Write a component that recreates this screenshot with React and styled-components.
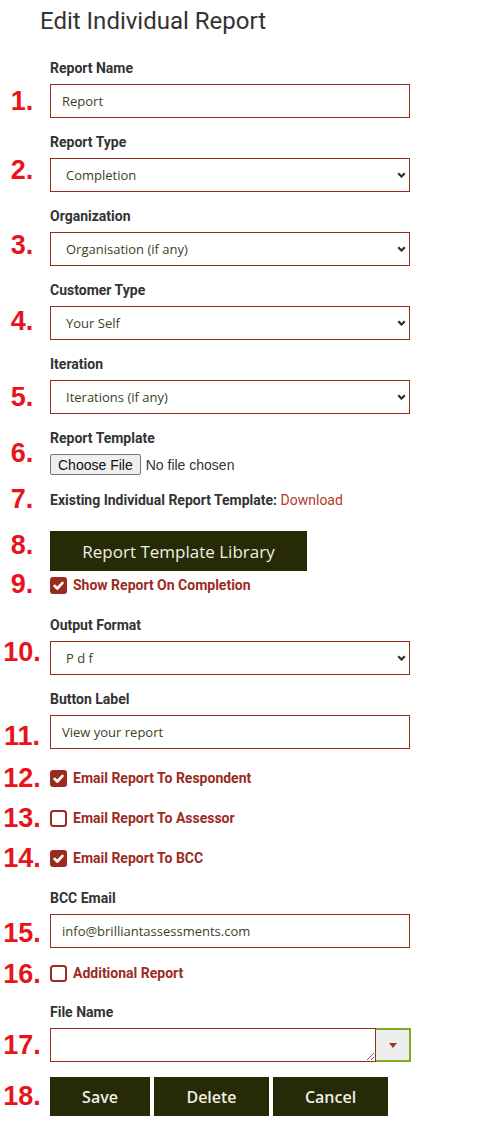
import React from "react";
import styled, { createGlobalStyle } from "styled-components";

const GlobalStyle = createGlobalStyle`
  * {
    box-sizing: border-box;
  }

  body {
    margin: 0;
    background: #fff;
    font-family: Roboto, "Liberation Sans", sans-serif;
  }
`;

const Page = styled.div`
  width: 477px;
  padding-bottom: 16px;
`;

const Title = styled.h2`
  margin: 7px 0 0 40px;
  font: 400 24px/28px Roboto, sans-serif;
  color: #333;
`;

/* every line of the form: step number on the left, content on the right */
const Row = styled.div`
  display: grid;
  grid-template-columns: 44px 360px;
  column-gap: 6px;
  row-gap: 7px;
  margin-top: ${(p) => p.$mt ?? 16}px;
`;

const Num = styled.div`
  grid-column: 1;
  grid-row: ${(p) => p.$rows || "auto"};
  display: flex;
  align-items: center;
  justify-content: center;
  font: 700 27px/0 "Liberation Sans", Arial, sans-serif;
  color: #e8141b;
  transform: translateY(${(p) => p.$dy || 0}px);
`;

const Label = styled.label`
  grid-column: 2;
  grid-row: 1;
  font: 700 14px/17px Roboto, sans-serif;
  color: #333;
`;

const TextInput = styled.input`
  grid-column: 2;
  width: 360px;
  height: 34px;
  padding: 0 11px;
  border: 1px solid #9a2c1f;
  border-radius: 0;
  outline: none;
  background: #fff;
  font: 400 13px "Open Sans", sans-serif;
  color: #3c421e;
`;

const SelectWrap = styled.div`
  grid-column: 2;
  position: relative;
  width: 360px;
  height: 34px;
`;

const Select = styled.select`
  appearance: none;
  width: 100%;
  height: 100%;
  padding: 0 30px 0 15px;
  border: 1px solid #9a2c1f;
  border-radius: 0;
  outline: none;
  background: #fff;
  font: 400 13px "Open Sans", sans-serif;
  color: #3c421e;
`;

const Chevron = styled.svg`
  position: absolute;
  right: 4px;
  top: 14px;
  pointer-events: none;
`;

const FilePicker = styled.div`
  grid-column: 2;
  display: flex;
  align-items: center;
  gap: 5px;
  font: 400 14px "Liberation Sans", Arial, sans-serif;
  color: #333;
`;

const FileButton = styled.button`
  height: 21px;
  padding: 0 7px;
  border: 1px solid #767676;
  border-radius: 2px;
  background: #efefef;
  font: 400 14px "Liberation Sans", Arial, sans-serif;
  color: #111;
`;

const Note = styled.div`
  grid-column: 2;
  font: 700 14px/17px Roboto, sans-serif;
  color: #333;

  a {
    font-weight: 400;
    color: #b5382b;
    text-decoration: none;
  }
`;

const ButtonSlot = styled.div`
  grid-column: 2;
  display: flex;
  gap: 4px;
  padding-top: ${(p) => p.$pad || 0}px;
`;

const DarkButton = styled.button`
  width: ${(p) => p.$w}px;
  height: ${(p) => p.$h || 39}px;
  border: none;
  background: #262a06;
  color: #efefe4;
  font: ${(p) => (p.$big ? "500 17px" : "600 16px")} "Open Sans", sans-serif;
  cursor: pointer;
`;

const CheckLabel = styled.label`
  grid-column: 2;
  display: flex;
  align-items: center;
  gap: 6px;
  height: 17px;
  font: 700 14px/17px Roboto, sans-serif;
  color: #9a2c1f;
`;

const Combo = styled.div`
  grid-column: 2;
  display: flex;
  width: 361px;
  height: 34px;
`;

const TextArea = styled.textarea`
  width: 326px;
  height: 34px;
  border: 1px solid #9a2c1f;
  border-radius: 0;
  outline: none;
  font: 400 13px "Open Sans", sans-serif;
  color: #3c421e;
`;

const DropButton = styled.span`
  display: flex;
  align-items: center;
  justify-content: center;
  width: 35px;
  height: 34px;
  background: #eee;
  border: 2px solid #7eab1e;
  border-left: none;

  &::after {
    content: "";
    border-left: 4px solid transparent;
    border-right: 4px solid transparent;
    border-top: 5px solid #a3342a;
  }
`;

const CheckBox = ({ checked }) => (
  <svg width="17" height="17" viewBox="0 0 17 17">
    {checked ? (
      <>
        <rect x="0" y="0" width="17" height="17" rx="3" fill="#9a2c1f" />
        <path d="M4.5 8.8l2.8 2.7 5.2-5.6" fill="none" stroke="#fff" strokeWidth="2.6" strokeLinecap="round" strokeLinejoin="round" />
      </>
    ) : (
      <rect x="1" y="1" width="15" height="15" rx="2.5" fill="#fff" stroke="#9a2c1f" strokeWidth="2" />
    )}
  </svg>
);

const TextField = ({ n, dy, label, value }) => (
  <Row>
    <Label>{label}</Label>
    <Num $rows="2" $dy={dy}>{n}.</Num>
    <TextInput defaultValue={value} />
  </Row>
);

const SelectField = ({ n, dy, label, value, mt }) => (
  <Row $mt={mt}>
    <Label>{label}</Label>
    <Num $rows="2" $dy={dy}>{n}.</Num>
    <SelectWrap>
      <Select defaultValue={value}>
        <option>{value}</option>
      </Select>
      <Chevron width="9" height="6" viewBox="0 0 9 6">
        <path d="M1.2 1.2l3.3 3.3 3.3-3.3" fill="none" stroke="#2f3410" strokeWidth="2.2" />
      </Chevron>
    </SelectWrap>
  </Row>
);

const CheckRow = ({ n, dy, mt, checked, children }) => (
  <Row $mt={mt}>
    <Num $dy={dy}>{n}.</Num>
    <CheckLabel>
      <CheckBox checked={checked} />
      {children}
    </CheckLabel>
  </Row>
);

export default function App() {
  return (
    <Page>
      <GlobalStyle />
      <Title>Edit Individual Report</Title>

      <Row $mt={25}>
        <Label>Report Name</Label>
        <Num $rows="2">1.</Num>
        <TextInput defaultValue="Report" />
      </Row>
      <SelectField n={2} dy={-5} label="Report Type" value="Completion" />
      <SelectField n={3} dy={-4} label="Organization" value="Organisation (if any)" />
      <SelectField n={4} dy={-2} label="Customer Type" value="Your Self" />
      <SelectField n={5} label="Iteration" value="Iterations (if any)" />

      <Row>
        <Label>Report Template</Label>
        <Num $rows="1 / span 2">6.</Num>
        <FilePicker>
          <FileButton>Choose File</FileButton>
          <span>No file chosen</span>
        </FilePicker>
      </Row>

      <Row $mt={17}>
        <Num $dy={-2}>7.</Num>
        <Note>
          Existing Individual Report Template: <a href="#download">Download</a>
        </Note>
      </Row>

      <Row $mt={10}>
        <Num>8.</Num>
        <ButtonSlot $pad={12}>
          <DarkButton $w={257} $h={40} $big>Report Template Library</DarkButton>
        </ButtonSlot>
      </Row>

      <CheckRow n={9} dy={-2} mt={6} checked>Show Report On Completion</CheckRow>

      <SelectField n={10} dy={-6} mt={23} label="Output Format" value="P d f" />
      <TextField n={11} dy={4} label="Button Label" value="View your report" />

      <CheckRow n={12} dy={-1} mt={21} checked>Email Report To Respondent</CheckRow>
      <CheckRow n={13} dy={-1} mt={23}>Email Report To Assessor</CheckRow>
      <CheckRow n={14} dy={-1} mt={23} checked>Email Report To BCC</CheckRow>

      <Row $mt={23}>
        <Label>BCC Email</Label>
        <Num $rows="2" $dy={2}>15.</Num>
        <TextInput defaultValue="info@brilliantassessments.com" />
      </Row>

      <CheckRow n={16} mt={17}>Additional Report</CheckRow>

      <Row $mt={22}>
        <Label>File Name</Label>
        <Num $rows="2">17.</Num>
        <Combo>
          <TextArea />
          <DropButton />
        </Combo>
      </Row>

      <Row $mt={15}>
        <Num $dy={-1}>18.</Num>
        <ButtonSlot>
          <DarkButton $w={100}>Save</DarkButton>
          <DarkButton $w={115}>Delete</DarkButton>
          <DarkButton $w={115}>Cancel</DarkButton>
        </ButtonSlot>
      </Row>
    </Page>
  );
}
